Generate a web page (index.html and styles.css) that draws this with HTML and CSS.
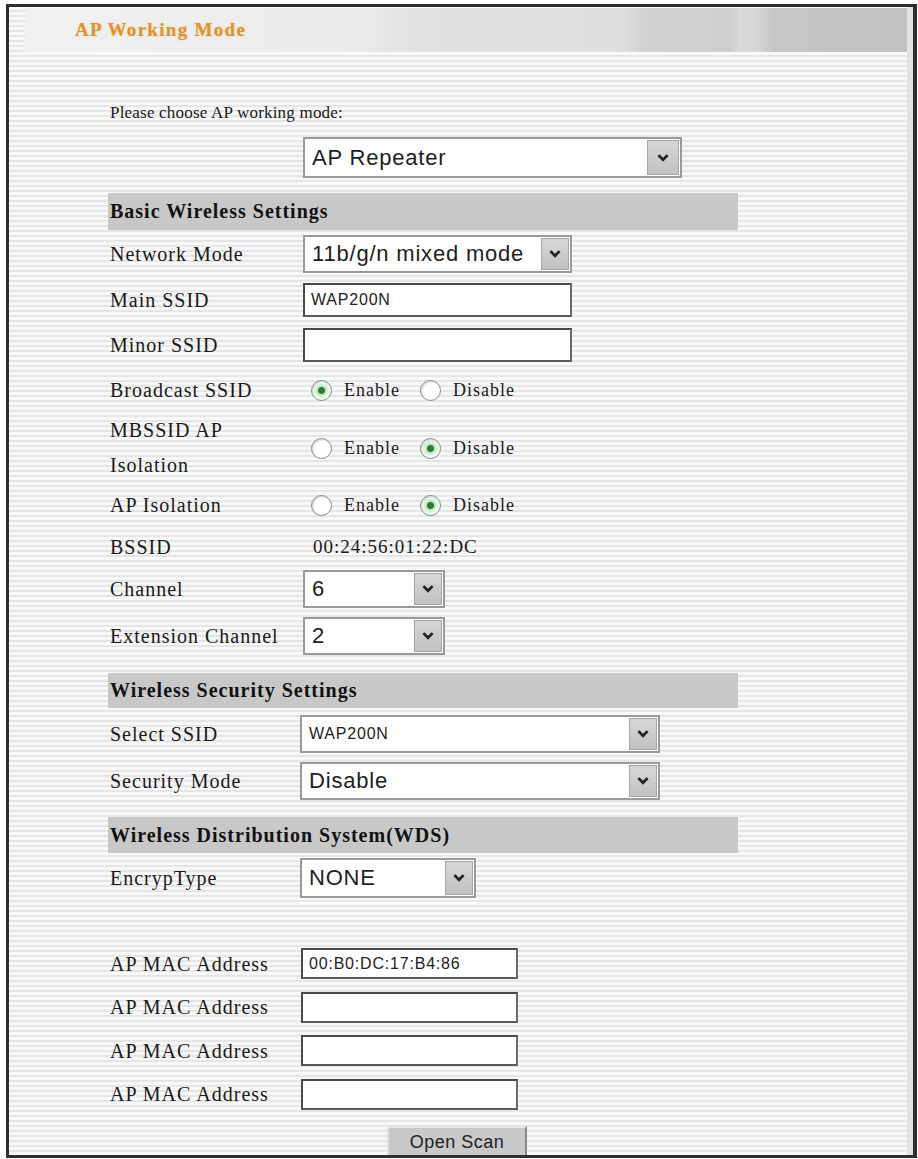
FILE: index.html
```html
<!DOCTYPE html>
<html>
<head>
<meta charset="utf-8">
<title>AP Working Mode</title>
<link rel="stylesheet" href="styles.css">
</head>
<body>
<div class="frame">
  <div class="header"><span class="title">AP Working Mode</span></div>
  <div class="content">
    <p class="intro">Please choose AP working mode:</p>
    <div class="mode-line">
      <div class="select sel-mode">
        <span class="value">AP Repeater</span>
        <span class="arrow"><svg viewBox="0 0 10 7" width="12" height="8"><polyline points="1,1 5,5 9,1" fill="none" stroke="#222" stroke-width="2.4"/></svg></span>
      </div>
    </div>

    <div class="bar">Basic Wireless Settings</div>
    <div class="row h47"><div class="label">Network Mode</div>
      <div class="select sel-net"><span class="value">11b/g/n mixed mode</span>
        <span class="arrow"><svg viewBox="0 0 10 7" width="12" height="8"><polyline points="1,1 5,5 9,1" fill="none" stroke="#222" stroke-width="2.4"/></svg></span></div>
    </div>
    <div class="row h45"><div class="label">Main SSID</div><div class="input in-ssid"><span class="small-text">WAP200N</span></div></div>
    <div class="row h45"><div class="label">Minor SSID</div><div class="input in-ssid"></div></div>
    <div class="row h46"><div class="label">Broadcast SSID</div>
      <div class="radios">
        <span class="radio on"></span><span class="rlabel">Enable</span>
        <span class="radio"></span><span class="rlabel">Disable</span>
      </div>
    </div>
    <div class="row h70"><div class="label two">MBSSID AP<br>Isolation</div>
      <div class="radios">
        <span class="radio"></span><span class="rlabel">Enable</span>
        <span class="radio on"></span><span class="rlabel">Disable</span>
      </div>
    </div>
    <div class="row h44"><div class="label">AP Isolation</div>
      <div class="radios">
        <span class="radio"></span><span class="rlabel">Enable</span>
        <span class="radio on"></span><span class="rlabel">Disable</span>
      </div>
    </div>
    <div class="row h40"><div class="label">BSSID</div><div class="bssid">00:24:56:01:22:DC</div></div>
    <div class="row h44"><div class="label">Channel</div>
      <div class="select sel-ch"><span class="value">6</span>
        <span class="arrow"><svg viewBox="0 0 10 7" width="12" height="8"><polyline points="1,1 5,5 9,1" fill="none" stroke="#222" stroke-width="2.4"/></svg></span></div>
    </div>
    <div class="row h50"><div class="label">Extension Channel</div>
      <div class="select sel-ch"><span class="value">2</span>
        <span class="arrow"><svg viewBox="0 0 10 7" width="12" height="8"><polyline points="1,1 5,5 9,1" fill="none" stroke="#222" stroke-width="2.4"/></svg></span></div>
    </div>

    <div class="bar bar-sec">Wireless Security Settings</div>
    <div class="row h52 alt"><div class="label">Select SSID</div>
      <div class="select sel-wide"><span class="value small-text">WAP200N</span>
        <span class="arrow"><svg viewBox="0 0 10 7" width="12" height="8"><polyline points="1,1 5,5 9,1" fill="none" stroke="#222" stroke-width="2.4"/></svg></span></div>
    </div>
    <div class="row h42 alt"><div class="label">Security Mode</div>
      <div class="select sel-wide"><span class="value">Disable</span>
        <span class="arrow"><svg viewBox="0 0 10 7" width="12" height="8"><polyline points="1,1 5,5 9,1" fill="none" stroke="#222" stroke-width="2.4"/></svg></span></div>
    </div>

    <div class="bar bar-wds">Wireless Distribution System(WDS)</div>
    <div class="row h50 alt"><div class="label">EncrypType</div>
      <div class="select sel-enc"><span class="value">NONE</span>
        <span class="arrow"><svg viewBox="0 0 10 7" width="12" height="8"><polyline points="1,1 5,5 9,1" fill="none" stroke="#222" stroke-width="2.4"/></svg></span></div>
    </div>

    <div class="mac-list">
      <div class="row h43 alt"><div class="label">AP MAC Address</div><div class="input in-mac"><span class="small-text">00:B0:DC:17:B4:86</span></div></div>
      <div class="row h44 alt"><div class="label">AP MAC Address</div><div class="input in-mac"></div></div>
      <div class="row h43 alt"><div class="label">AP MAC Address</div><div class="input in-mac"></div></div>
      <div class="row h44 alt"><div class="label">AP MAC Address</div><div class="input in-mac"></div></div>
    </div>
    <div class="btn-line"><button class="btn">Open Scan</button></div>
  </div>
</div>
</body>
</html>
```

FILE: styles.css
```css
html, body {
  margin: 0;
  padding: 0;
  background: #ffffff;
}

body {
  width: 918px;
  height: 1159px;
  overflow: hidden;
  font-family: "Liberation Serif", "Times New Roman", serif;
  color: #1a1a1a;
}

.frame {
  box-sizing: border-box;
  margin: 4px 1px 0 6px;
  height: 1154px;
  border: 3px solid #2e2e2e;
  border-right-width: 4px;
  overflow: hidden;
  background: repeating-linear-gradient(to bottom, #f9f9f9 0px, #f9f9f9 3px, #e6e6e6 3px, #e6e6e6 5px);
  box-shadow: inset -6px 0 0 #e2e2e2;
}

.header {
  margin: 1px 6px 0 16px;
  height: 44px;
  display: flex;
  align-items: center;
  padding-left: 50px;
  background: linear-gradient(to right,
    #f1f1f1 0%, #ececec 38%, #e1e1e1 44%, #dedede 68%,
    #d2d2d2 70%, #cfcfcf 80%, #dadada 81%, #d6d6d6 83%,
    #c6c6c6 85%, #c2c2c2 100%);
}

.title {
  font-weight: bold;
  font-size: 19px;
  letter-spacing: 1.3px;
  color: #de9232;
  text-shadow: 0 0 2px #f3cf8c;
}

.content {
  padding-left: 99px;
  width: 630px;
}

.intro {
  margin: 49px 0 0 2px;
  height: 24px;
  line-height: 24px;
  font-size: 17px;
  letter-spacing: 0.2px;
}

.mode-line {
  margin-top: 12px;
  padding-left: 195px;
}

.bar {
  margin-top: 15px;
  height: 37px;
  line-height: 37px;
  background: #c8c8c8;
  padding-left: 2px;
  font-weight: bold;
  font-size: 20px;
  letter-spacing: 1px;
  color: #111;
}

.bar-sec {
  margin-top: 12px;
  height: 35px;
  line-height: 35px;
}

.bar-wds {
  margin-top: 15px;
  height: 36px;
  line-height: 36px;
}

.row {
  display: flex;
  align-items: center;
}

.h40 { height: 40px; }
.h42 { height: 42px; }
.h43 { height: 43px; }
.h44 { height: 44px; }
.h45 { height: 45px; }
.h46 { height: 46px; }
.h47 { height: 47px; }
.h50 { height: 50px; }
.h52 { height: 52px; }
.h70 { height: 70px; }

.label {
  width: 195px;
  flex: none;
  padding-left: 2px;
  box-sizing: border-box;
  font-size: 20px;
  letter-spacing: 1px;
  line-height: 24px;
}

.label.two {
  line-height: 35px;
}

.row.alt .label {
  width: 192px;
}

.select {
  box-sizing: border-box;
  display: flex;
  align-items: stretch;
  background: #ffffff;
  border: 2px solid #9a9a9a;
  padding: 1px;
}

.select .value {
  flex: 1;
  display: flex;
  align-items: center;
  padding-left: 6px;
  font-family: "Liberation Sans", Arial, sans-serif;
  font-size: 22px;
  letter-spacing: 0.8px;
  color: #1e1e1e;
  white-space: nowrap;
  overflow: hidden;
}

.select .arrow {
  flex: none;
  width: 28px;
  display: flex;
  align-items: center;
  justify-content: center;
  background: linear-gradient(to bottom, #d6d6d6, #c2c2c2);
  border: 1px solid #a5a5a5;
  box-sizing: border-box;
}

.sel-mode { width: 379px; height: 41px; }
.sel-mode .arrow { width: 32px; }
.sel-net { width: 269px; height: 38px; }
.sel-ch { width: 142px; height: 38px; }
.sel-wide { width: 360px; height: 38px; }
.sel-enc { width: 176px; height: 40px; }

.input {
  box-sizing: border-box;
  background: #ffffff;
  border: 2px solid #4a4a4a;
  border-right-color: #6a6a6a;
  border-bottom-color: #5a5a5a;
  display: flex;
  align-items: center;
  padding-left: 6px;
}

.in-ssid { width: 269px; height: 34px; }
.in-mac { width: 217px; height: 31px; margin-left: 1px; }

.small-text {
  font-family: "Liberation Sans", Arial, sans-serif;
  font-size: 16px;
  letter-spacing: 0.8px;
  color: #222;
}

.select .value.small-text {
  font-size: 16px;
}

.radios {
  display: flex;
  align-items: center;
  padding-left: 8px;
}

.radio {
  box-sizing: border-box;
  width: 21px;
  height: 21px;
  border-radius: 50%;
  border: 1.5px solid #8a8a8a;
  background: #ffffff;
  box-shadow: inset 1px 1px 2px #d0d0d0;
}

.radio.on {
  border-color: #6f9a6f;
  background: radial-gradient(circle, #2f7a34 0px, #2f7a34 3px, #bfe3bf 4px, #e8f6e8 7px, #ffffff 9px);
}

.rlabel {
  font-size: 18px;
  letter-spacing: 1px;
  margin-left: 12px;
  margin-right: 20px;
}

.bssid {
  font-size: 19px;
  letter-spacing: 1px;
  padding-left: 10px;
}

.mac-list {
  margin-top: 39px;
}

.btn-line {
  margin-top: 10px;
  padding-left: 279px;
}

.btn {
  display: block;
  box-sizing: border-box;
  width: 140px;
  height: 32px;
  background: #c9c9c9;
  border: 2px solid #8a8a8a;
  border-top-color: #e8e8e8;
  border-left-color: #e0e0e0;
  font-family: "Liberation Sans", Arial, sans-serif;
  font-size: 18px;
  letter-spacing: 0.5px;
  color: #222;
  padding: 0;
}
```
